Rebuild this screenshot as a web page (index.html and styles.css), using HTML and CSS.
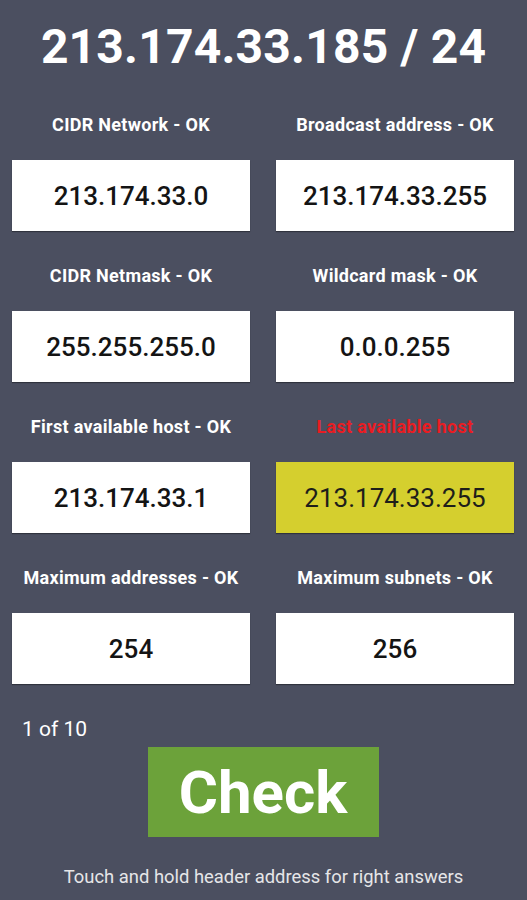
FILE: index.html
```html
<!DOCTYPE html>
<html>
<head>
<meta charset="utf-8">
<link rel="stylesheet" href="styles.css">
</head>
<body>
<div class="app">
  <header class="header"><h1 class="title">213.174.33.185 / 24</h1></header>
  <div class="grid">
    <div class="cell"><div class="label">CIDR Network - OK</div><div class="box">213.174.33.0</div></div>
    <div class="cell"><div class="label">Broadcast address - OK</div><div class="box">213.174.33.255</div></div>
    <div class="cell"><div class="label">CIDR Netmask - OK</div><div class="box">255.255.255.0</div></div>
    <div class="cell"><div class="label">Wildcard mask - OK</div><div class="box">0.0.0.255</div></div>
    <div class="cell"><div class="label">First available host - OK</div><div class="box">213.174.33.1</div></div>
    <div class="cell"><div class="label label-error">Last available host</div><div class="box box-error">213.174.33.255</div></div>
    <div class="cell"><div class="label">Maximum addresses - OK</div><div class="box">254</div></div>
    <div class="cell"><div class="label">Maximum subnets - OK</div><div class="box">256</div></div>
  </div>
  <div class="counter">1 of 10</div>
  <div class="actions"><button class="check">Check</button></div>
  <p class="hint">Touch and hold header address for right answers</p>
</div>
</body>
</html>
```
FILE: styles.css
```css
html, body {
  margin: 0;
  padding: 0;
  background: #4b4f60;
}
body {
  font-family: Roboto, "Liberation Sans", sans-serif;
  color: #fff;
}
.app {
  width: 527px;
  height: 900px;
  overflow: hidden;
}
.header {
  height: 94px;
  display: flex;
  align-items: center;
  justify-content: center;
}
.title {
  margin: 0;
  font-size: 48px;
  font-weight: 700;
  line-height: 1;
  letter-spacing: 0.2px;
}
.grid {
  display: grid;
  grid-template-columns: 238px 238px;
  column-gap: 26px;
  row-gap: 33px;
  padding: 0 13px 0 12px;
  margin-top: 19px;
}
.cell {
  display: flex;
  flex-direction: column;
}
.label {
  height: 24px;
  line-height: 24px;
  text-align: center;
  font-size: 18px;
  font-weight: 700;
  letter-spacing: 0.3px;
  margin-bottom: 23px;
}
.label-error {
  color: #ea1c22;
}
.box {
  height: 71px;
  background: #fff;
  color: #141414;
  display: flex;
  align-items: center;
  justify-content: center;
  font-size: 26px;
  font-weight: 500;
  box-sizing: border-box;
  box-shadow: 0 1px 1px rgba(0, 0, 0, 0.35);
}
.box-error {
  background: #d5cf2e;
  font-weight: 400;
  color: #1e1e1a;
}
.counter {
  margin-top: 33px;
  padding-left: 22px;
  height: 24px;
  line-height: 24px;
  font-size: 21px;
}
.actions {
  display: flex;
  justify-content: center;
  margin-top: 6px;
}
.check {
  width: 231px;
  height: 90px;
  margin-left: -1px;
  border: none;
  background: #6ca23a;
  color: #fff;
  font-family: Roboto, "Liberation Sans", sans-serif;
  font-size: 60px;
  font-weight: 700;
  padding: 0;
}
.hint {
  margin: 28px 0 0;
  height: 24px;
  line-height: 24px;
  text-align: center;
  font-size: 18.4px;
  color: #e6e6e8;
}
```
